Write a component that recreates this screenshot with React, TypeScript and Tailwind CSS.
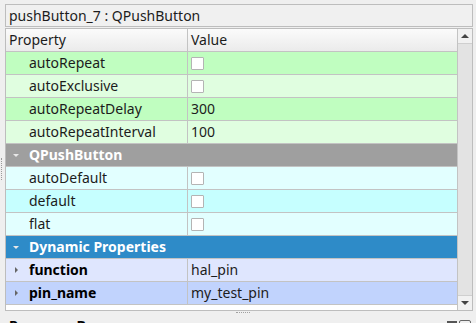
import React from "react";

type Row =
  | { kind: "prop"; name: string; value?: string; check?: boolean; bg: string; bold?: boolean; arrow?: boolean }
  | { kind: "group"; name: string; bg: string };

const rows: Row[] = [
  { kind: "prop", name: "autoRepeat", check: true, bg: "bg-[#c0fec0]" },
  { kind: "prop", name: "autoExclusive", check: true, bg: "bg-[#e0fee0]" },
  { kind: "prop", name: "autoRepeatDelay", value: "300", bg: "bg-[#c0fec0]" },
  { kind: "prop", name: "autoRepeatInterval", value: "100", bg: "bg-[#e0fee0]" },
  { kind: "group", name: "QPushButton", bg: "bg-[#9f9f9f]" },
  { kind: "prop", name: "autoDefault", check: true, bg: "bg-[#e2ffff]" },
  { kind: "prop", name: "default", check: true, bg: "bg-[#c6ffff]" },
  { kind: "prop", name: "flat", check: true, bg: "bg-[#e2ffff]" },
  { kind: "group", name: "Dynamic Properties", bg: "bg-[#2e8bc8]" },
  { kind: "prop", name: "function", value: "hal_pin", bg: "bg-[#dfe6fe]", bold: true, arrow: true },
  { kind: "prop", name: "pin_name", value: "my_test_pin", bg: "bg-[#c1d3fd]", bold: true, arrow: true },
];

function Checkbox() {
  return <div className="w-[13px] h-[13px] bg-white border border-[#b4b4b4] rounded-[1px]" />;
}

export default function App() {
  return (
    <div className="relative w-[476px] h-[323px] overflow-hidden bg-[#efefef] text-[14px] text-[#1c1c1c] font-['Noto_Sans',sans-serif]">
      {/* splitter grip on the left */}
      <div className="absolute left-[1px] top-[158px] h-[22px] border-l border-dotted border-[#9a9a9a]" />

      <div className="pt-[4px] pl-[5px]">
        {/* object name */}
        <div className="w-[468px] h-[23px] border border-[#bdbdbd] bg-[#f0f0f0] flex items-center pl-[3px] leading-none">
          pushButton_7 : QPushButton
        </div>

        {/* property tree */}
        <div className="mt-[1px] w-[468px] h-[283px] border border-[#bdbdbd] bg-white flex">
          <div className="w-[453px] flex flex-col border-r border-[#c3c3c3]">
            <div className="flex h-[23px] border-b border-[#c3c3c3] bg-gradient-to-b from-[#fbfbfb] to-[#ebebeb] leading-none">
              <div className="w-[182px] border-r border-[#c3c3c3] flex items-center pl-[3px]">Property</div>
              <div className="flex-1 flex items-center pl-[3px]">Value</div>
            </div>
            {rows.map((r, i) =>
              r.kind === "group" ? (
                <div key={i} className={`flex items-center h-[23px] border-b border-[#c3c3c3] ${r.bg} text-white font-bold leading-none`}>
                  <span className="w-[23px] flex pl-[7px]">
                    <span className="w-0 h-0 border-x-[3px] border-x-transparent border-t-[3px] border-t-[#e8e8e8]" />
                  </span>
                  {r.name}
                </div>
              ) : (
                <div key={i} className={`flex h-[23px] border-b border-[#c3c3c3] ${r.bg} leading-none`}>
                  <div className={`w-[182px] border-r border-[#c3c3c3] flex items-center ${r.bold ? "font-bold text-black" : ""}`}>
                    <span className="w-[23px] flex pl-[9px]">
                      {r.arrow && (
                        <span className="w-0 h-0 border-y-[3px] border-y-transparent border-l-[3px] border-l-[#666]" />
                      )}
                    </span>
                    {r.name}
                  </div>
                  <div className="flex-1 flex items-center pl-[3px]">
                    {r.check ? <Checkbox /> : r.value}
                  </div>
                </div>
              )
            )}
          </div>
          {/* vertical scrollbar */}
          <div className="w-[14px] flex flex-col bg-[#e3e3e3]">
            <div className="h-[15px] bg-[#f1f1f1] border-b border-[#cfcfcf] flex items-center justify-center">
              <span className="w-0 h-0 border-x-[4px] border-x-transparent border-b-[4px] border-b-[#444]" />
            </div>
            <div className="flex-1" />
            <div className="h-[15px] bg-[#f1f1f1] border-t border-[#cfcfcf] flex items-center justify-center">
              <span className="w-0 h-0 border-x-[4px] border-x-transparent border-t-[4px] border-t-[#444]" />
            </div>
          </div>
        </div>
      </div>

      {/* splitter grip bottom */}
      <div className="absolute left-[236px] top-[312px] w-[14px] border-t border-dotted border-[#a0a0a0]" />

      {/* next dock, cut off */}
      <div className="absolute left-[9px] top-[319px] font-bold text-[14px] leading-none text-black">Resource Browser</div>
      <div className="absolute left-[447px] top-[321px] w-[10px] h-[4px] bg-[#555]" />
      <div className="absolute left-[459px] top-[320px] w-[12px] h-[8px] border border-[#666] rounded-[2px]" />
    </div>
  );
}
